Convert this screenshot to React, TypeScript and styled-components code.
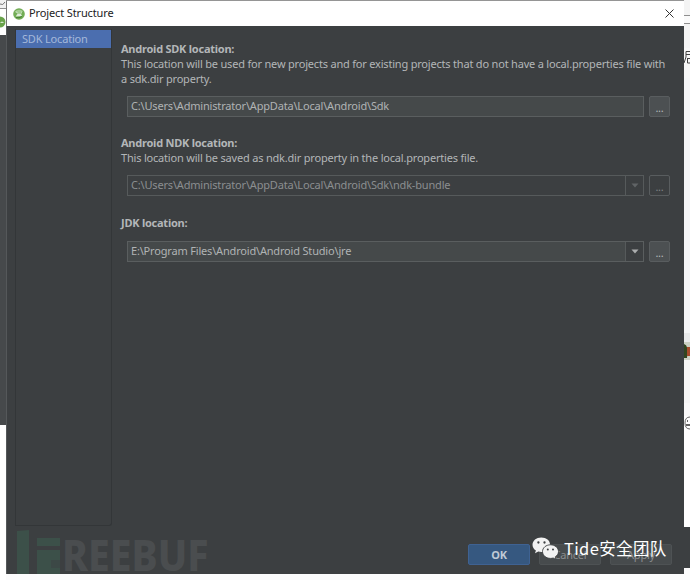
import React from "react";
import styled, { createGlobalStyle, css } from "styled-components";

const GlobalStyle = createGlobalStyle`
  * { box-sizing: border-box; }
  body { margin: 0; background: #fbfbfc; overflow: hidden; }
`;

const Desktop = styled.div`
  display: grid;
  grid-template-columns: 6px 678px 6px;
  width: 690px;
  height: 580px;
  overflow: hidden;
  font: 11px/14px "Noto Sans", "Noto Sans CJK SC", sans-serif;
  color: #b3b6b8;
`;

const EdgeColumn = styled.div`
  display: flex;
  flex-direction: column;
  overflow: hidden;
  height: 580px;
`;

const EdgeBlock = styled.div<{ $h: number; $bg: string; $line?: boolean }>`
  flex: 0 0 ${(p) => p.$h}px;
  background: ${(p) => p.$bg};
  border-bottom: ${(p) => (p.$line ? "1px solid #8f8f8f" : "0")};
  overflow: hidden;
  svg { display: block; }
`;

const WindowArea = styled.div`
  display: flex;
  flex-direction: column;
  height: 580px;
  border-top: 1px solid #959595;
`;

const Dialog = styled.section`
  position: relative;
  display: flex;
  flex-direction: column;
  height: 573px;
  background: #3c3f41;
  box-shadow: inset 1px 0 #55585a;
`;

const TitleBar = styled.header`
  display: flex;
  align-items: center;
  height: 25px;
  flex: none;
  padding: 0 10px 0 6px;
  background: #fff;
  color: #222;
  border-left: 1px solid #777;
`;

const Title = styled.h1`
  flex: 1;
  margin: -1px 0 0 4px;
  font-size: 11px;
  font-weight: 400;
  letter-spacing: -0.13px;
`;

const Body = styled.div`
  display: flex;
  height: 500px;
  padding: 3px 14px 0 9px;
`;

const Sidebar = styled.nav`
  width: 97px;
  height: 497px;
  flex: none;
  border: solid #333638;
  border-width: 0 1px 1px;
  border-radius: 0 0 3px 0;
`;

const SidebarItem = styled.div`
  height: 18px;
  margin-top: 1px;
  padding-left: 6px;
  line-height: 18px;
  letter-spacing: -0.18px;
  background: #4b6eaf;
  color: #a4b8da;
`;

const Main = styled.main`
  display: flex;
  flex-direction: column;
  flex: 1;
  min-width: 0;
  padding: 13px 0 0 9px;
`;

const Section = styled.section<{ $h: number }>`
  height: ${(p) => p.$h}px;
  flex: none;
`;

const Heading = styled.h2`
  margin: 0;
  height: 14px;
  font-size: 11px;
  font-weight: 700;
  letter-spacing: -0.24px;
`;

const Description = styled.p`
  margin: 0;
  line-height: 15px;
  white-space: nowrap;
  letter-spacing: -0.195px;
`;

const FieldRow = styled.div<{ $gap: number }>`
  display: flex;
  gap: 5px;
  height: 21px;
  margin: ${(p) => p.$gap}px 0 0 6px;
`;

const Field = styled.div<{ $disabled?: boolean }>`
  display: flex;
  width: 517px;
  flex: none;
  border: 1px solid ${(p) => (p.$disabled ? "#565a5b" : "#5a5e5f")};
  background: ${(p) => (p.$disabled ? "#3c3f41" : "#45494a")};
  color: ${(p) => (p.$disabled ? "#8b8e90" : "#b0b3b4")};
`;

const PathText = styled.span`
  flex: 1;
  padding-left: 3px;
  line-height: 18px;
  letter-spacing: -0.18px;
`;

const Arrow = styled.span<{ $disabled?: boolean }>`
  display: flex;
  align-items: center;
  justify-content: center;
  width: 18px;
  border-left: 1px solid #565a5b;
  background: #3c3f41;
  color: ${(p) => (p.$disabled ? "#606466" : "#abadae")};
`;

const BrowseButton = styled.button<{ $disabled?: boolean }>`
  width: 21px;
  height: 21px;
  flex: none;
  padding: 2px 0 0;
  border: 1px solid #595d5f;
  border-radius: 2px;
  background: ${(p) => (p.$disabled ? "#3c3f41" : "#4c5052")};
  color: ${(p) => (p.$disabled ? "#808385" : "#b5b8ba")};
  font: inherit;
  line-height: 15px;
  letter-spacing: -0.2px;
`;

const Footer = styled.footer`
  display: flex;
  justify-content: flex-end;
  gap: 9px;
  margin-top: 18px;
  padding-right: 12px;
`;

const DialogButton = styled.button<{ $primary?: boolean }>`
  width: 62px;
  height: 21px;
  padding: 0;
  border: 1px solid #4e5254;
  border-radius: 2px;
  background: #474b4d;
  color: #8b8e90;
  font: inherit;
  line-height: 17px;
  letter-spacing: -0.2px;
  ${(p) =>
    p.$primary &&
    css`
      border-color: #3f6292;
      background: #365880;
      color: #bfc9d6;
      font-weight: 700;
    `}
`;

const SiteMark = styled.div`
  position: absolute;
  left: 11px;
  bottom: 0;
  display: flex;
  height: 45px;
  svg { flex: none; }
`;

const SiteName = styled.span`
  color: #4a4d4f;
  font: 800 43px/52px "Noto Sans", sans-serif;
  transform: scaleX(0.91);
  transform-origin: left;
`;

const AccountMark = styled.div`
  position: absolute;
  left: 526px;
  top: 534px;
  display: flex;
  align-items: center;
  gap: 5px;
  height: 26px;
  color: #fff;
  font: 16.5px/24px "Noto Sans CJK SC", sans-serif;
  letter-spacing: 0.35px;
  white-space: nowrap;
`;

const AppIcon = ({ size = 12 }: { size?: number }) => (
  <svg width={size} height={size} viewBox="0 0 12 12">
    <circle cx="6" cy="6" r="5.8" fill="#72ad55" />
    <path d="M1.5 4Q5 0 10 3L6 6Z" fill="#a3cc91" />
    <path d="M2.8 8.5Q4 4.5 8 6L9 8Z" fill="#e0eedb" />
    <path d="M3.3 3.5l1.3 2M8.8 3.5l-1.3 3" stroke="#dcebd6" strokeWidth=".8" />
    <path d="M3 9.5q3 1 6-1" fill="none" stroke="#477e35" />
  </svg>
);

const CloseIcon = () => (
  <svg width="9" height="9" viewBox="0 0 9 9">
    <path d="M.5.5l8 8M8.5.5l-8 8" stroke="#333" />
  </svg>
);

const Triangle = () => (
  <svg width="8" height="5" viewBox="0 0 8 5">
    <path d="M.5.5h7L4 4.5Z" fill="currentColor" />
  </svg>
);

const ChatIcon = () => (
  <svg width="27" height="23" viewBox="0 0 27 23">
    <path d="M9.3.5C4.3.5.5 3.7.5 7.7c0 2.5 1.3 4.5 3.4 5.8L3 16.3l3.3-1.7c1 .3 2 .4 3 .4 5 0 8.8-3.2 8.8-7.3S14.3.5 9.3.5Z" fill="#f2f2f2" />
    <path d="M18.5 7.8c-4.5 0-8 3-8 6.8s3.5 6.8 8 6.8c1 0 1.9-.1 2.7-.4l2.7 1.5-.7-2.6c2-1.2 3.3-3.1 3.3-5.3 0-3.8-3.5-6.8-8-6.8Z" fill="#f2f2f2" stroke="#3c3f41" strokeWidth=".9" />
    <g fill="#3c3f41">
      <circle cx="6.4" cy="5.5" r="1.15" />
      <circle cx="12.5" cy="5.5" r="1.15" />
      <circle cx="15.8" cy="12.5" r="1" />
      <circle cx="21" cy="12.5" r="1" />
    </g>
  </svg>
);

export default function App() {
  return (
    <>
      <GlobalStyle />
      <Desktop>
        <EdgeColumn>
          <EdgeBlock $h={9} $bg="#f1f1f1" $line>
            <svg width="6" height="8"><path d="M0 4q3 2 5-2" fill="none" stroke="#777" /></svg>
          </EdgeBlock>
          <EdgeBlock $h={26} $bg="#fff">
            <svg width="6" height="26">
              <circle cx="0" cy="13" r="5.5" fill="#69a34b" />
              <path d="M0 14q2-3 4 0" fill="#d7e8d0" />
            </svg>
          </EdgeBlock>
          <EdgeBlock $h={390} $bg="#46494b" />
          <EdgeBlock $h={155} $bg="#fff" />
        </EdgeColumn>
        <WindowArea>
          <Dialog>
            <TitleBar>
              <AppIcon />
              <Title>Project Structure</Title>
              <CloseIcon />
            </TitleBar>
            <Body>
              <Sidebar>
                <SidebarItem>SDK Location</SidebarItem>
              </Sidebar>
              <Main>
                <Section $h={94}>
                  <Heading>Android SDK location:</Heading>
                  <Description>
                    This location will be used for new projects and for existing projects that do not have a local.properties file with
                    <br />a sdk.dir property.
                  </Description>
                  <FieldRow $gap={10}>
                    <Field><PathText>C:\Users\Administrator\AppData\Local\Android\Sdk</PathText></Field>
                    <BrowseButton>...</BrowseButton>
                  </FieldRow>
                </Section>
                <Section $h={80}>
                  <Heading>Android NDK location:</Heading>
                  <Description>This location will be saved as ndk.dir property in the local.properties file.</Description>
                  <FieldRow $gap={10}>
                    <Field $disabled>
                      <PathText>C:\Users\Administrator\AppData\Local\Android\Sdk\ndk-bundle</PathText>
                      <Arrow $disabled><Triangle /></Arrow>
                    </Field>
                    <BrowseButton $disabled>...</BrowseButton>
                  </FieldRow>
                </Section>
                <Section $h={50}>
                  <Heading>JDK location:</Heading>
                  <FieldRow $gap={11}>
                    <Field>
                      <PathText>E:\Program Files\Android\Android Studio\jre</PathText>
                      <Arrow><Triangle /></Arrow>
                    </Field>
                    <BrowseButton>...</BrowseButton>
                  </FieldRow>
                </Section>
              </Main>
            </Body>
            <SiteMark>
              <svg width="45" height="45">
                <path d="M0 2l12-1v44H0ZM20 9h23v8H20ZM20 21h23v24H20Z" fill="#3c5049" />
                <path d="M34 31h9v8h-9Z" fill="#3c4846" />
              </svg>
              <SiteName>REEBUF</SiteName>
            </SiteMark>
            <Footer>
              <DialogButton $primary>OK</DialogButton>
              <DialogButton>Cancel</DialogButton>
              <DialogButton>Apply</DialogButton>
            </Footer>
            <AccountMark><ChatIcon />Tide安全团队</AccountMark>
          </Dialog>
        </WindowArea>
        <EdgeColumn>
          <EdgeBlock $h={16} $bg="#f4f4f4" $line />
          <EdgeBlock $h={8} $bg="#fafafa" $line />
          <EdgeBlock $h={24} $bg="#f4f4f4" />
          <EdgeBlock $h={30} $bg="#f7f7f7">
            <svg width="6" height="18" fill="none" stroke="#444">
              <path d="M6 3.5H2V9L0 15M2 6.5h4M3 10.5h3M3.5 10v5H6" />
            </svg>
          </EdgeBlock>
          <EdgeBlock $h={255} $bg="#f5f6f7" />
          <EdgeBlock $h={9} $bg="#e9eaeb" />
          <EdgeBlock $h={18} $bg="#cbd0c3">
            <svg width="6" height="18">
              <path d="M0 2q5 1 3 14H0Z" fill="#31451f" />
              <path d="M3 5h3v9H3Z" fill="#a84a2b" />
            </svg>
          </EdgeBlock>
          <EdgeBlock $h={43} $bg="#f5f5f5" />
          <EdgeBlock $h={13} $bg="#f9f9f9" />
          <EdgeBlock $h={111} $bg="#fff">
            <svg width="6" height="16" fill="none" stroke="#666">
              <path d="M6 1Q1 1 1 7t5 6" />
              <path d="M2 9h4M3 5h1" strokeWidth="2" />
            </svg>
          </EdgeBlock>
          <EdgeBlock $h={41} $bg="#3c3f41" />
        </EdgeColumn>
      </Desktop>
    </>
  );
}
